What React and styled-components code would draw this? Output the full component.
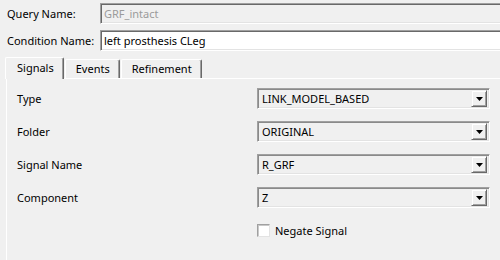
import React from "react";
import styled, { createGlobalStyle } from "styled-components";

const Global = createGlobalStyle`
  html, body { margin: 0; padding: 0; background: #f0f0f0; overflow: hidden; }
  body { font-family: "Noto Sans", "Liberation Sans", sans-serif; font-size: 11px; color: #000; }
  * { box-sizing: border-box; }
`;

const Page = styled.div`
  width: 500px;
  height: 260px;
  padding-top: 3px;
  display: flex;
  flex-direction: column;
  overflow: hidden;
`;

const FieldRow = styled.div`
  display: flex;
  align-items: center;
  height: 21px;
  margin-bottom: 6px;
`;

const FieldLabel = styled.div`
  width: 100px;
  padding-left: 7px;
  flex: none;
  line-height: 15px;
`;

const TextField = styled.div`
  flex: 1;
  height: 21px;
  margin-right: -4px;
  border-top: 1px solid #a0a0a0;
  border-left: 1px solid #a0a0a0;
  border-bottom: 1px solid #ffffff;
  box-shadow: inset 1px 1px 0 #696969, inset 0 -1px 0 #e3e3e3;
  background: ${(p) => (p.$disabled ? "#f0f0f0" : "#ffffff")};
  color: ${(p) => (p.$disabled ? "#9b9b9b" : "#000")};
  padding: 0 0 0 3px;
  display: flex;
  align-items: center;
  line-height: 15px;
`;

const TabStrip = styled.div`
  display: flex;
  align-items: flex-end;
  height: 21px;
  padding-left: 5px;
  position: relative;
  z-index: 1;
`;

const Tab = styled.div`
  height: ${(p) => (p.$active ? "22px" : "19px")};
  margin-bottom: ${(p) => (p.$active ? "-1px" : "0")};
  padding: ${(p) => (p.$active ? "2px 9px 0 11px" : "1px 9px 0 10px")};
  background: #f0f0f0;
  border-top: 1px solid #ffffff;
  border-left: 1px solid #ffffff;
  border-right: 1px solid #696969;
  box-shadow: inset -1px 0 0 #a0a0a0;
  border-radius: 2px 2px 0 0;
  line-height: 15px;
  display: flex;
  align-items: flex-start;
  margin-left: ${(p) => (p.$active ? "0" : "1px")};
`;

const Panel = styled.div`
  flex: 1;
  margin-left: 6px;
  border-top: 1px solid #ffffff;
  border-left: 1px solid #ffffff;
  padding: 9px 0 0 10px;
  display: grid;
  grid-template-columns: 240px 233px;
  grid-auto-rows: 21px;
  row-gap: 12px;
  align-content: start;
`;

const RowLabel = styled.div`
  align-self: center;
  line-height: 15px;
`;

const Combo = styled.div`
  height: 21px;
  border-top: 1px solid #a0a0a0;
  border-left: 1px solid #a0a0a0;
  border-bottom: 1px solid #ffffff;
  border-right: 1px solid #ffffff;
  box-shadow: inset 1px 1px 0 #8a8a8a, inset -1px -1px 0 #e3e3e3;
  background: #f0f0f0;
  display: flex;
  align-items: center;
  padding: 2px 2px 2px 4px;
`;

const ComboText = styled.div`
  flex: 1;
  line-height: 15px;
  white-space: nowrap;
`;

const ArrowButton = styled.div`
  width: 16px;
  height: 17px;
  flex: none;
  background: #f0f0f0;
  border-top: 1px solid #f0f0f0;
  border-left: 1px solid #f0f0f0;
  border-right: 1px solid #696969;
  border-bottom: 1px solid #696969;
  box-shadow: inset 1px 1px 0 #ffffff, inset -1px -1px 0 #a0a0a0;
  display: flex;
  align-items: center;
  justify-content: center;
`;

const CheckRow = styled.label`
  grid-column: 2;
  display: flex;
  align-items: center;
  gap: 5px;
  line-height: 15px;
`;

const CheckBox = styled.span`
  width: 13px;
  height: 13px;
  background: #fff;
  border-top: 1px solid #a0a0a0;
  border-left: 1px solid #a0a0a0;
  border-bottom: 1px solid #e3e3e3;
  border-right: 1px solid #e3e3e3;
  box-shadow: inset 1px 1px 0 #c8c8c8;
`;

const Arrow = () => (
  <svg width="7" height="4" viewBox="0 0 7 4">
    <path d="M0 0h7L3.5 4z" fill="#000" />
  </svg>
);

const rows = [
  ["Type", "LINK_MODEL_BASED"],
  ["Folder", "ORIGINAL"],
  ["Signal Name", "R_GRF"],
  ["Component", "Z"],
];

export default function App() {
  return (
    <>
      <Global />
      <Page>
        <FieldRow>
          <FieldLabel>Query Name:</FieldLabel>
          <TextField $disabled>GRF_intact</TextField>
        </FieldRow>
        <FieldRow>
          <FieldLabel>Condition Name:</FieldLabel>
          <TextField>left prosthesis CLeg</TextField>
        </FieldRow>
        <TabStrip>
          <Tab $active>Signals</Tab>
          <Tab>Events</Tab>
          <Tab>Refinement</Tab>
        </TabStrip>
        <Panel>
          {rows.map(([label, value]) => (
            <React.Fragment key={label}>
              <RowLabel>{label}</RowLabel>
              <Combo>
                <ComboText>{value}</ComboText>
                <ArrowButton>
                  <Arrow />
                </ArrowButton>
              </Combo>
            </React.Fragment>
          ))}
          <CheckRow>
            <CheckBox />
            Negate Signal
          </CheckRow>
        </Panel>
      </Page>
    </>
  );
}
